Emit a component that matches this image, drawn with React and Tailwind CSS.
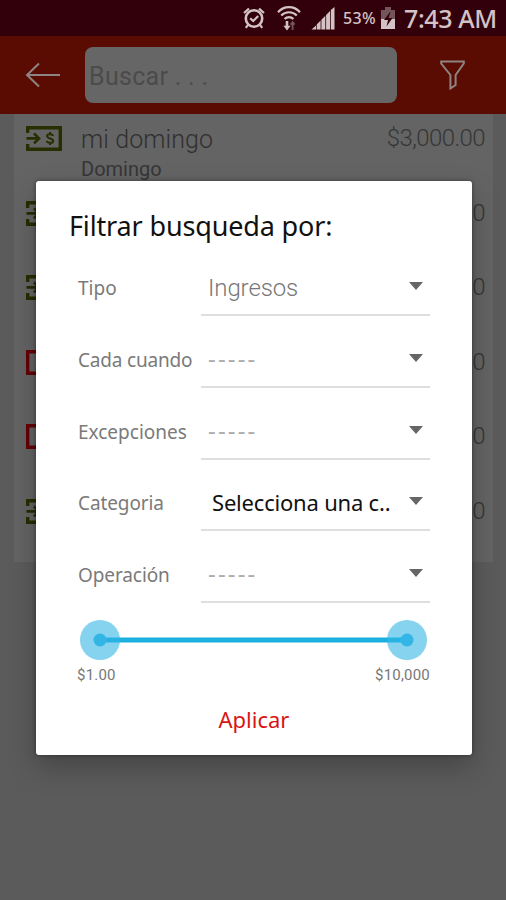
import React from "react";

const NOTO = "font-['Noto_Sans',sans-serif]";

function AlarmIcon() {
  return (
    <svg className="block h-[24px] w-[24px]" viewBox="0 0 24 24" fill="none" stroke="#d3c3c6" strokeWidth="2.6">
      <circle cx="12" cy="12.5" r="8.2" />
      <path d="M2 7 7 2.600M22 7 17 2.600M5.800 19.200 3.800 21.800M18.200 19.200l2 2.600M8.200 12.200l3 2.800 5-5" strokeWidth="2.2" />
    </svg>
  );
}

function WifiIcon() {
  return (
    <svg className="block h-[27px] w-[24px]" viewBox="0 0 24 27" fill="none" stroke="#d3c3c6" strokeWidth="2.200">
      <path d="M1 7.200C7 .4 17 .4 23 7.200M4.200 10.600c4.200-4.500 11.400-4.500 15.600 0M7.600 14c2.400-2.500 6.400-2.500 8.800 0" />
      <path d="M10 16v7" strokeWidth="2.6" />
      <path d="M6.400 20.800h7.200L10 25.600z" fill="#d3c3c6" stroke="none" />
      <path d="M15.600 25v-7M13.600 19.600l2-2.400 2 2.400" stroke="#75555c" strokeWidth="1.800" />
    </svg>
  );
}

function SignalIcon() {
  return (
    <svg className="block h-[24px] w-[24px]" viewBox="0 0 24 24" fill="#d3c3c6">
      <path d="M.5 23.500 5 19.500v4zM5.700 18.500l3.900-3.900v8.900H5.700zM10.400 13.700l3.900-3.900v13.700h-3.900zM15.100 8.900l3.900-3.900v18.500h-3.900zM19.800 4l3.700-3v22.500h-3.700z" />
    </svg>
  );
}

function BatteryIcon() {
  return (
    <svg className="block h-[23px] w-[16px]" viewBox="0 0 16 23">
      <path d="M5 0h6v3h4v9H1V3h4z" fill="#75555c" />
      <path d="M1 12h14v10H1z" fill="#d3c3c6" />
      <path d="m10 5-6 8h4l-1.500 6.500L12.500 11H8.500L10.500 5z" fill="#32000a" />
    </svg>
  );
}

function MoneyIcon({ red }) {
  const color = red ? "#650006" : "#272e00";
  return (
    <svg className="block h-[25px] w-[36px] shrink-0" viewBox="0 0 36 25" fill="none" stroke={color} strokeWidth="3.400">
      {red ? (
        <path d="M1.700 1.700h32.600v21.600H1.700z" />
      ) : (
        <>
          <path d="M1.700 7V1.700h32.600v21.600H1.700V18" />
          <path d="M.5 12.400h12M8 7.400l5 5-5 5" strokeWidth="2.600" />
        </>
      )}
      <path d="M27 10c-.4-2.500-6-2.400-6 .1 0 2.700 6.200 2.100 6.200 4.800 0 2.600-6 2.600-6.500 0M24 6v2.500M24 16.500V19" strokeWidth="2" />
    </svg>
  );
}

function ListRow({ name, day, amount, red }) {
  return (
    <div className="flex h-[74.5px] items-start pl-[12px] pr-[8px] pt-[12px]">
      <MoneyIcon red={red} />
      <div className="ml-[19px] grow font-[Roboto,sans-serif]">
        <div className="text-[25px] font-light leading-[28px] tracking-[0.100px] text-[#303030]">{name}</div>
        <div className="mt-[3px] text-[20px] leading-[24px] text-[#363636]">{day}</div>
      </div>
      <div className="font-[Roboto,sans-serif] text-[24px] font-light leading-[24px] tracking-[-0.600px] text-[#363636]">{amount}</div>
    </div>
  );
}

function Field({ label, value, kind, tracking = "tracking-[0px]" }) {
  const valueClass =
    kind === "title"
      ? "pl-[7px] pt-px font-[Roboto,sans-serif] text-[24px] font-light tracking-[-0.100px] text-[#777]"
      : kind === "strong"
        ? "pl-[11px] font-['Noto_Sans',sans-serif] text-[22px] tracking-[-0.200px] text-[#111]"
        : "pl-[7px] -mt-px font-['Noto_Sans',sans-serif] text-[24px] tracking-[2.150px] text-[#adadad]";
  return (
    <div className="flex h-[71.8px] items-start">
      <div className={`${NOTO} w-[123px] shrink-0 whitespace-nowrap pt-[15px] text-[19px] leading-[28px] text-[#7a7a7a] ${tracking}`}>
        {label}
      </div>
      <div className="flex h-[57px] w-[229px] items-start border-b-2 border-[#dedede] pt-[13px]">
        <div className={`grow whitespace-nowrap leading-[30px] ${valueClass}`}>{value}</div>
        <svg className="mr-[7px] mt-[10px] block h-[8px] w-[14px] shrink-0" viewBox="0 0 14 8" fill="#666">
          <path d="M0 0h14L7 8z" />
        </svg>
      </div>
    </div>
  );
}

export default function App() {
  return (
    <div className="relative h-[900px] w-[506px] overflow-hidden bg-[#5b5b5b]">
      <div className="flex h-[36px] items-center bg-[#32000a] pl-[242px]">
        <AlarmIcon />
        <div className="ml-[11px]"><WifiIcon /></div>
        <div className="ml-[10px]"><SignalIcon /></div>
        <div className={`${NOTO} ml-[8px] w-[37px] whitespace-nowrap text-[16px] font-medium tracking-[0.300px] text-[#d3c3c6]`}>53%</div>
        <BatteryIcon />
        <div className={`${NOTO} ml-[8px] whitespace-nowrap text-[25px] font-medium leading-[38px] tracking-[-0.400px] text-[#d3c3c6]`}>7:43 AM</div>
      </div>
      <div className="flex h-[78px] items-center bg-[#5a0c02]">
        <svg className="ml-[25px] block h-[26px] w-[36px]" viewBox="0 0 36 26" fill="none" stroke="#8e8481" strokeWidth="2">
          <path d="M35 13H2M14 1.500 2 13l12 11.500" />
        </svg>
        <div className="ml-[24px] flex h-[56px] w-[312px] items-center rounded-[8px] bg-[#666] pl-[4px] pt-[4px] font-[Roboto,sans-serif] text-[25px] tracking-[0.300px] text-[#4b4b4b]">
          Buscar . . .
        </div>
        <svg className="ml-[43px] block h-[30px] w-[25px]" viewBox="0 0 25 30" fill="none" stroke="#8e8481" strokeWidth="2">
          <path d="M1.200 1.500h22.600v2L15.600 15v10l-5.200 3.500V15L1.200 3.500z" />
        </svg>
      </div>
      <div className="ml-[14px] h-[448px] w-[479px] bg-[#646464]">
        <ListRow name="mi domingo" day="Domingo" amount="$3,000.00" />
        <ListRow amount="0" />
        <ListRow amount="0" />
        <ListRow amount="0" red />
        <ListRow amount="0" red />
        <ListRow amount="0" />
      </div>

      <div className="absolute left-[36px] top-[181px] h-[574px] w-[436px] rounded-[3px] bg-white shadow-[0_12px_28px_rgba(0,0,0,0.25),0_0_4px_rgba(0,0,0,0.4)]">
        <h1 className={`${NOTO} pl-[33px] pt-[25px] text-[27px] leading-[40px] tracking-[-0.150px] text-[#111]`}>Filtrar busqueda por:</h1>
        <div className="ml-[42px] mt-[13px]">
          <Field label="Tipo" value="Ingresos" kind="title" />
          <Field label="Cada cuando" value="-----" kind="dash" tracking="tracking-[-0.180px]" />
          <Field label="Excepciones" value="-----" kind="dash" />
          <Field label="Categoria" value="Selecciona una c.." kind="strong" tracking="tracking-[-0.100px]" />
          <Field label="Operación" value="-----" kind="dash" tracking="tracking-[-0.100px]" />
        </div>
        <svg className="ml-[44px] mt-px block h-[42px] w-[347px]" viewBox="0 0 347 42">
          <path d="M20 21h307" stroke="#19afe0" strokeWidth="5" />
          <g fill="#33b5e5">
            <circle cx="20" cy="21" r="20" fillOpacity="0.6" />
            <circle cx="327" cy="21" r="20" fillOpacity="0.6" />
            <circle cx="20" cy="21" r="6.500" />
            <circle cx="327" cy="21" r="6.500" />
          </g>
        </svg>
        <div className="flex justify-between pl-[41px] pr-[42px] pt-[4px] font-[Roboto,sans-serif] text-[15px] leading-[20px] tracking-[0.200px] text-[#777]">
          <span>$1.00</span>
          <span>$10,000</span>
        </div>
        <div className={`${NOTO} mt-[19px] text-center text-[22px] leading-[30px] text-[#d81414]`}>Aplicar</div>
      </div>
    </div>
  );
}
